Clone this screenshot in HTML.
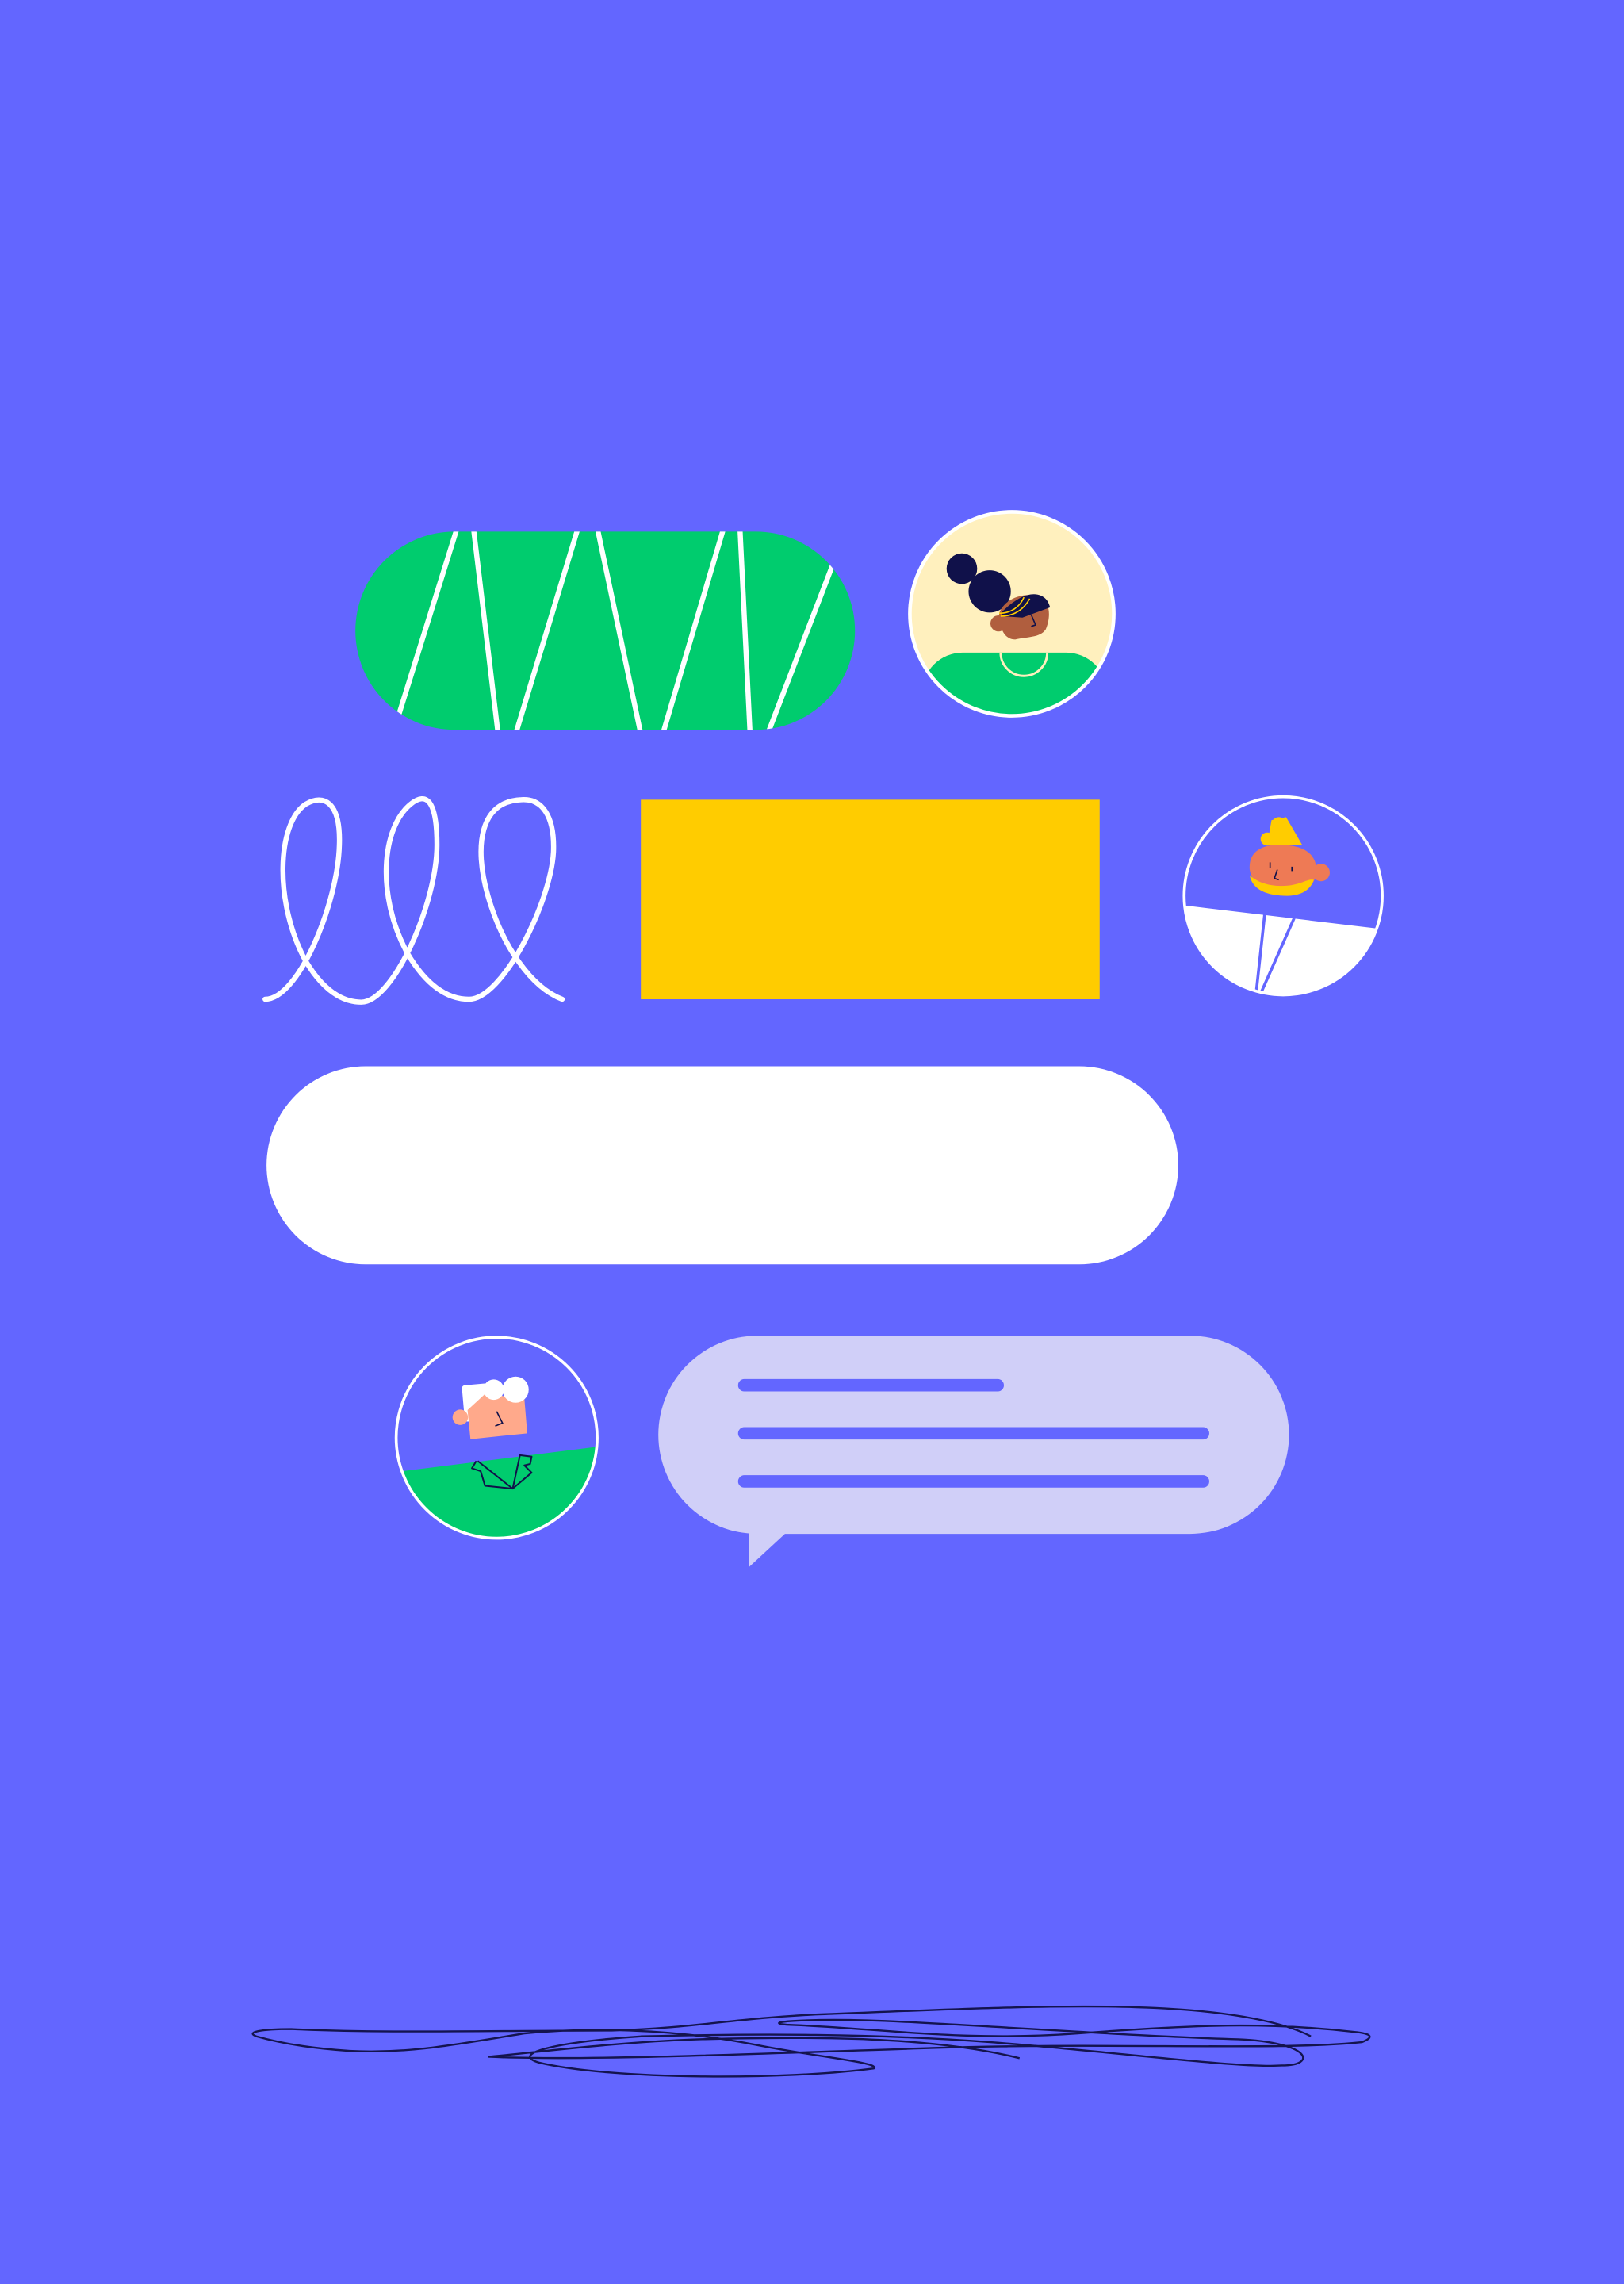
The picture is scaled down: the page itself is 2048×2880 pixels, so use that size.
<!DOCTYPE html>
<html><head><style>html,body{margin:0;padding:0;background:#6366FF;}svg{display:block}</style></head>
<body>
<svg width="2048" height="2880" viewBox="0 0 1115 1568" preserveAspectRatio="none" xmlns="http://www.w3.org/2000/svg">
<rect width="1115" height="1568" fill="#6366FF"/>
<defs>
<clipPath id="pill"><rect x="244" y="365" width="343" height="136" rx="68"/></clipPath>
<clipPath id="c1"><circle cx="694.7" cy="421.4" r="70"/></clipPath>
<clipPath id="c2"><circle cx="881" cy="615" r="68"/></clipPath>
<clipPath id="c3"><circle cx="341" cy="987" r="69"/></clipPath>
</defs>
<!-- green pill -->
<rect x="244" y="365" width="343" height="136" rx="68" fill="#00CC6E"/>
<g clip-path="url(#pill)" stroke="#fff" stroke-width="3.5">
<line x1="274" y1="490" x2="314" y2="362"/><line x1="325" y1="362" x2="342" y2="504"/>
<line x1="354" y1="504" x2="397" y2="362"/><line x1="410" y1="362" x2="440" y2="504"/>
<line x1="455" y1="504" x2="497" y2="362"/><line x1="508" y1="362" x2="515" y2="504"/>
<line x1="527" y1="504" x2="572" y2="387"/>
</g>
<!-- avatar 1 -->
<circle cx="694.7" cy="421.4" r="70" fill="#FFF0BE"/>
<g clip-path="url(#c1)">
<rect x="633" y="448" width="127" height="60" rx="28" fill="#00CC6E"/>
<path d="M687 448 A16 16 0 0 0 719 448" fill="none" stroke="#FFF0BE" stroke-width="1.6"/>
</g>
<circle cx="660.4" cy="390.4" r="10.5" fill="#10114A"/>
<circle cx="679.5" cy="406" r="14.5" fill="#10114A"/>
<circle cx="685.5" cy="428" r="5.5" fill="#B05E3E"/>
<path d="M686 421 C690 410 705 406 714 410 C722 414 721 425 718 432 C714 438 705 437 697 439 C690 439 686 432 686 421Z" fill="#B05E3E"/>
<path d="M688 420 C695 413 706 405 715 409 C719 411 720 414 721 417 L702 424 L688 423Z" fill="#10114A"/>
<path d="M686 421 C694 421 700 417 703 410 M687 423 C697 423 703 418 707 411" fill="none" stroke="#FFCC00" stroke-width="0.9"/>
<path d="M708 422 L711 429 L708 430" fill="none" stroke="#10114A" stroke-width="0.9"/>
<circle cx="694.7" cy="421.4" r="70" fill="none" stroke="#fff" stroke-width="2.5"/>
<!-- loops -->
<path d="M182 686 C205 686 232 620 233 580 C234 550 222 545 210 552 C190 565 188 620 210 660 C225 685 240 688 248 688 C270 688 300 620 300 580 C300 550 293 543 282 552 C262 568 258 615 280 655 C295 680 310 686 322 686 C345 686 378 620 380 585 C381 560 372 548 358 549 C330 550 325 580 335 615 C345 650 365 678 386 686" fill="none" stroke="#fff" stroke-width="3.5" stroke-linecap="round"/>
<!-- yellow rect -->
<rect x="440" y="549" width="315" height="137" fill="#FFCC00"/>
<!-- avatar 2 -->
<g clip-path="url(#c2)">
<polygon points="800,620 950,638 950,700 800,700" fill="#fff"/>
<line x1="868.3" y1="627.7" x2="862.4" y2="682" stroke="#6366FF" stroke-width="2"/>
<line x1="888.5" y1="630.4" x2="865.6" y2="682" stroke="#6366FF" stroke-width="2"/>
</g>
<circle cx="878" cy="566" r="5" fill="#FFCC00"/>
<path d="M873 563 L883 561 L894 580 L870 580 Z" fill="#FFCC00"/>
<circle cx="870" cy="576" r="4.5" fill="#FFCC00"/>
<circle cx="907" cy="599" r="6" fill="#EE7A55"/>
<path d="M858 597 C857 585 866 580 878 580 C890 580 900 583 903 592 C906 603 900 612 888 614 C876 616 860 610 858 597Z" fill="#EE7A55"/>
<path d="M858 601 C864 606 872 609 884 608 C894 607 898 603 902 604 C900 611 893 615 884 615 C870 615 860 611 858 601Z" fill="#FFCC00"/>
<path d="M872 592 L872 596 M887 595 L887 598 M877 597 L875 603 L878 604" fill="none" stroke="#10114A" stroke-width="0.9"/>
<circle cx="881" cy="615" r="68" fill="none" stroke="#fff" stroke-width="2"/>
<!-- white pill -->
<rect x="183" y="732" width="626" height="136" rx="68" fill="#fff"/>
<!-- avatar 3 -->
<g clip-path="url(#c3)">
<polygon points="260,1012 420,992 420,1070 260,1070" fill="#00CC6E"/>
</g>
<rect x="318" y="950" width="27" height="25" rx="2" fill="#fff" transform="rotate(-5 331 962)"/>
<circle cx="316" cy="973" r="5.3" fill="#FFA98B"/>
<path d="M321 968 L333 957 L360 960 L362 984 L323 988 Z" fill="#FFA98B"/>
<circle cx="339" cy="954" r="7" fill="#fff"/>
<circle cx="354" cy="954" r="9" fill="#fff"/>
<path d="M341 969 L345 977 L340 979" fill="none" stroke="#10114A" stroke-width="0.9"/>
<path d="M327 1003 L324 1008 L330 1010 L333 1020 L352 1022 L328 1003 M352 1022 L357 999 L365 1000 L364 1005 L360 1006 L365 1011 L352 1022" fill="none" stroke="#10114A" stroke-width="1.1" stroke-linejoin="round"/>
<circle cx="341" cy="987" r="69" fill="none" stroke="#fff" stroke-width="2"/>
<!-- speech bubble -->
<rect x="452" y="917" width="433" height="136" rx="68" fill="#D0CFF8"/>
<polygon points="514,1040 540,1052 514,1076" fill="#D0CFF8"/>
<g stroke="#6366FF" stroke-width="8.5" stroke-linecap="round">
<line x1="511" y1="951" x2="685" y2="951"/>
<line x1="511" y1="984" x2="826" y2="984"/>
<line x1="511" y1="1017" x2="826" y2="1017"/>
</g>
<!-- scribble -->
<path d="M700 1413 C640 1398 560 1398 480 1400 C420 1402 360 1410 335 1412 C400 1415 520 1410 640 1406 C760 1402 880 1408 935 1402 C945 1398 940 1396 930 1395 C870 1388 820 1390 740 1396 C660 1402 600 1392 540 1390 C520 1388 560 1385 620 1388 C700 1392 780 1398 850 1400 C900 1402 905 1418 880 1418 C850 1420 760 1408 680 1402 C600 1396 520 1396 440 1398 C380 1402 350 1410 370 1416 C420 1428 540 1428 600 1420 C605 1416 560 1412 520 1404 C460 1392 400 1392 360 1396 C310 1404 280 1410 240 1408 C210 1406 190 1402 176 1398 C168 1395 180 1393 200 1393 C260 1396 340 1394 420 1394 C480 1392 500 1386 560 1383 C640 1380 720 1376 780 1378 C850 1380 885 1390 900 1398" fill="none" stroke="#14144E" stroke-width="1.3"/>
</svg>
</body></html>
